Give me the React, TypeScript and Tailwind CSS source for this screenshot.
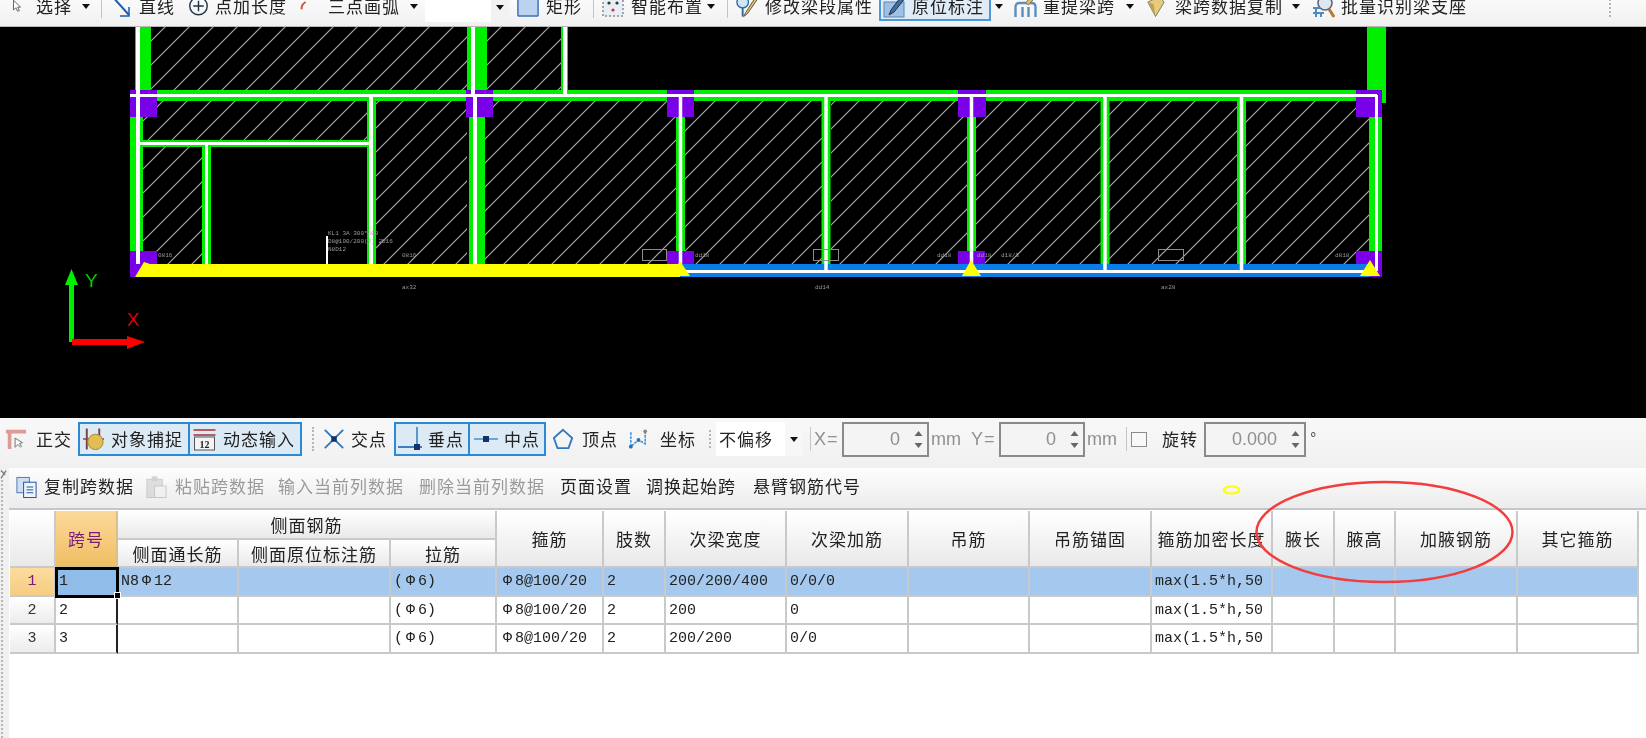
import React from "react";

const T = ({ className = "", children }: { className?: string; children: React.ReactNode }) => (
  <div className={`shrink-0 mb-[2px] whitespace-nowrap text-[17px] leading-none tracking-[1px] ${className}`}>{children}</div>
);
const Caret = ({ className = "" }: { className?: string }) => (
  <svg viewBox="0 0 8 5" className={`w-[8px] h-[5px] shrink-0 ${className}`}><polygon points="0,0 8,0 4,5" fill="#111" /></svg>
);
const Sep = ({ className = "" }: { className?: string }) => <div className={`w-[1px] shrink-0 bg-[#c4c4c4] ${className}`} />;
const Dots = ({ className = "" }: { className?: string }) => <div className={`w-[2px] shrink-0 border-l-2 border-dotted border-[#b5b5b5] ${className}`} />;

const I = ({ className = "", children }: { className?: string; children: React.ReactNode }) => (
  <svg viewBox="0 0 24 24" className={`shrink-0 h-[24px] ${className}`}>{children}</svg>
);

const NumBox = ({ className = "", value }: { className?: string; value: string }) => (
  <div className={`h-[35px] shrink-0 flex items-center justify-end border-2 border-[#8a8a8a] bg-[#f4f4f4] ${className}`}>
    <span className="text-[18px] text-[#8f8f8f] font-['Liberation_Sans',sans-serif] mr-[9px]">{value}</span>
    <div className="w-[18px] flex flex-col gap-[7px] items-center">
      <svg viewBox="0 0 8 5" className="w-[9px] h-[5px]"><polygon points="0,5 8,5 4,0" fill="#666" /></svg>
      <svg viewBox="0 0 8 5" className="w-[9px] h-[5px]"><polygon points="0,0 8,0 4,5" fill="#666" /></svg>
    </div>
  </div>
);

const Bar = () => <span className="inline-block w-[15px] text-center">Φ</span>;

const CAD = () => {
  const hatch: [number, number, number, number][] = [
    [151, 27, 316, 63], [487, 27, 76, 63], [143, 100, 225, 40], [143, 146, 59, 118], [376, 100, 91, 164],
    [485, 100, 191, 164], [685, 100, 137, 164], [831, 100, 136, 164], [976, 100, 125, 164], [1109, 100, 128, 164], [1246, 100, 123, 164],
  ];
  const inner = [680.5, 826, 971.5, 1105, 1241.5];
  const purple: [number, number, number, number][] = [
    [130, 90, 27, 27], [466, 90, 27, 27], [667, 90, 27, 27], [958, 90, 28, 27], [1356, 90, 26, 27],
    [130, 251, 27, 26], [667, 251, 27, 13], [958, 251, 27, 13], [1356, 251, 26, 26],
  ];
  const tiny: [number, number, string][] = [
    [158, 257, "0816"], [402, 257, "0816"], [695, 257, "dd18"], [937, 257, "dd18"], [977, 257, "dd18"], [1001, 257, "d18/3"], [1335, 257, "d818"],
    [402, 289, "ax32"], [815, 289, "dd14"], [1161, 289, "ax28"], [328, 235, "KL1 3A 300*500"], [328, 243, "D8@100/200(2) 2D16"], [328, 251, "N8D12"],
  ];
  return (
    <svg viewBox="0 27 1646 391" className="block w-[1646px] h-[391px] bg-black">
      <defs>
        <pattern id="h" width="24" height="24" patternUnits="userSpaceOnUse">
          <path d="M-2 2 L2 -2 M0 24 L24 0 M22 26 L26 22" stroke="#a8a8a8" strokeWidth="1.2" />
        </pattern>
      </defs>
      {hatch.map(([x, y, w, h], i) => <rect key={i} x={x} y={y} width={w} height={h} fill="url(#h)" />)}
      <g fill="#00ee00">
        <rect x="135" y="27" width="16" height="64" />
        <rect x="467" y="27" width="20" height="64" />
        <rect x="561" y="27" width="7" height="64" />
        <rect x="1367" y="27" width="19" height="76" />
        <rect x="130" y="90" width="1240" height="11" />
        <rect x="130" y="117" width="13" height="135" />
        <rect x="469" y="117" width="16" height="148" />
        <rect x="1369" y="117" width="13" height="135" />
        <rect x="140" y="140" width="231" height="7" />
        <rect x="202" y="146" width="9" height="119" />
        <rect x="367" y="100" width="9" height="165" />
        {inner.map((x) => <rect key={x} x={x - 4.5} y="100" width="9" height="165" />)}
      </g>
      {purple.map(([x, y, w, h], i) => <rect key={i} x={x} y={y} width={w} height={h} fill="#7a00e8" />)}
      <rect x="680" y="264" width="690" height="13" fill="#0a7ee8" />
      <rect x="680" y="270" width="695" height="3" fill="#fff" />
      <polygon points="135,277 144,262 150,264 680,264 680,277" fill="#ffff00" />
      <g fill="#fff">
        <rect x="136" y="27" width="4" height="237" />
        <rect x="471" y="27" width="4" height="68" />
        <rect x="473" y="95" width="4" height="169" />
        <rect x="563" y="27" width="4" height="68" />
        <rect x="1375" y="95" width="3" height="176" />
        <rect x="130" y="94" width="1247" height="3" />
        <rect x="140" y="142" width="230" height="3" />
        <rect x="205" y="143" width="3" height="121" />
        <rect x="369" y="96" width="4" height="168" />
        <rect x="326" y="236" width="2" height="28" />
        {inner.map((x) => <rect key={x} x={x - 1.75} y="95" width="3.5" height={x === 680.5 || x === 971.5 ? 169 : 176} />)}
      </g>
      <g fill="#ffff00">
        <polygon points="671,276 680,261 690,276" />
        <polygon points="962,276 971,260 981,276" />
        <polygon points="1360,276 1370,260 1380,276" />
      </g>
      <g fill="none" stroke="#8c8c8c" strokeWidth="1">
        <rect x="642.5" y="249.5" width="24" height="11" />
        <rect x="813.5" y="249.5" width="25" height="11" />
        <rect x="1158.5" y="249.5" width="25" height="11" />
      </g>
      {tiny.map(([x, y, s], i) => (
        <text key={i} x={x} y={y} fontSize="6" fill="#9a9a9a" fontFamily="Liberation Mono, monospace">{s}</text>
      ))}
      <rect x="69" y="280" width="5" height="62" fill="#00ee00" />
      <polygon points="71.5,269 78,285 65,285" fill="#00ee00" />
      <rect x="72" y="339" width="56" height="6" fill="#ff0000" />
      <polygon points="127,336 145,342 127,349" fill="#ff0000" />
      <text x="85" y="287" fontSize="19" fill="#00d000" fontFamily="Liberation Sans, sans-serif">Y</text>
      <text x="127" y="326" fontSize="19" fill="#e00000" fontFamily="Liberation Sans, sans-serif">X</text>
    </svg>
  );
};

const TopBar = () => (
  <div className="h-[27px] pb-[14px] flex items-center overflow-hidden bg-gradient-to-b from-[#fafafa] to-[#f0f0f0] border-b border-[#b8b8b8] text-[#222]">
    <I className="ml-[10px] w-[14px]"><path d="M6 2 L6 19 L10 15 L13 21 L16 20 L13 14 L18 14 Z" fill="#fff" stroke="#555" strokeWidth="1.5" /></I>
    <T className="ml-[12px] w-[36px]">选择</T>
    <Caret className="ml-[10px]" />
    <Sep className="ml-[11px] h-[24px]" />
    <I className="ml-[6px] w-[26px]"><path d="M2 1 L20 21" stroke="#1d5fa8" strokeWidth="2" /><path d="M20 13 V22 H11" stroke="#1d5fa8" strokeWidth="1.5" fill="none" /></I>
    <T className="ml-[5px] w-[36px]">直线</T>
    <I className="ml-[13px] w-[21px]"><circle cx="12" cy="12" r="10" fill="none" stroke="#234" strokeWidth="1.6" /><path d="M12 6 V18 M6 12 H18" stroke="#234" strokeWidth="1.6" /></I>
    <T className="ml-[6px] w-[73px]">点加长度</T>
    <I className="ml-[11px] w-[8px]"><path d="M20 0 Q6 8 8 22" stroke="#c8583a" strokeWidth="6" fill="none" /></I>
    <T className="ml-[21px] w-[72px]">三点画弧</T>
    <Caret className="ml-[10px]" />
    <div className="ml-[7px] w-[84px] h-[22px] self-start flex items-center bg-white">
      <div className="w-[66px] h-full" />
      <div className="w-[18px] h-full bg-[#f2f2f2] flex items-center justify-center pb-[7px]"><Caret /></div>
    </div>
    <I className="ml-[8px] w-[22px]"><rect x="1" y="1" width="22" height="22" rx="1" fill="#bcd3f0" stroke="#3f6fb5" strokeWidth="1.6" /></I>
    <T className="ml-[7px] w-[36px]">矩形</T>
    <Sep className="ml-[11px] h-[24px]" />
    <I className="ml-[7px] w-[24px]"><rect x="2" y="2" width="20" height="20" fill="#e8eef5" stroke="#556" strokeDasharray="2 2" /><circle cx="8" cy="9" r="1.6" fill="#333" /><circle cx="16" cy="9" r="1.6" fill="#333" /><circle cx="12" cy="16" r="1.6" fill="#c33" /></I>
    <T className="ml-[6px] w-[72px]">智能布置</T>
    <Caret className="ml-[4px]" />
    <Sep className="ml-[12px] h-[24px]" />
    <I className="ml-[7px] w-[23px]"><circle cx="8" cy="8" r="6" fill="#cfe6f7" stroke="#2c6aa0" strokeWidth="1.4" /><path d="M8 14 V23" stroke="#2c6aa0" strokeWidth="2" /><path d="M22 2 L11 19 L9 23 L13 20 L24 4 Z" fill="#e5c05a" stroke="#555" /></I>
    <T className="ml-[7px] w-[107px]">修改梁段属性</T>
    <div className="ml-[7px] w-[112px] h-[30px] shrink-0 flex items-center border-2 border-[#4f98d8] bg-[#dfebf7]">
      <I className="ml-[2px] w-[24px]"><rect x="1" y="8" width="20" height="15" fill="#9fc0e4" stroke="#5b86b5" /><path d="M20 0 L8 16 L6 21 L11 18 L23 3 Z" fill="#3c6fa8" stroke="#234" /></I>
      <T className="ml-[5px] w-[74px]">原位标注</T>
    </div>
    <Caret className="ml-[4px]" />
    <I className="ml-[10px] w-[25px]"><path d="M2 23 V13 Q2 9 6 9 H18 Q22 9 22 13 V23 M9 23 V13 M15 23 V13" fill="none" stroke="#5c8fc0" strokeWidth="2.4" /><path d="M20 0 L12 9 L15 11 L23 2 Z" fill="#e2bd60" stroke="#776" /></I>
    <T className="ml-[5px] w-[72px]">重提梁跨</T>
    <Caret className="ml-[11px]" />
    <I className="ml-[10px] w-[23px]"><path d="M4 8 L16 2 L21 8 L12 23 Z" fill="#e6cc7a" stroke="#776" /><path d="M4 8 L12 23 L10 10 Z" fill="#b8a45a" /></I>
    <T className="ml-[8px] w-[107px]">梁跨数据复制</T>
    <Caret className="ml-[10px]" />
    <I className="ml-[11px] w-[24px]"><circle cx="14" cy="9" r="7" fill="#dbe8f2" stroke="#667" strokeWidth="1.6" /><path d="M18 15 L23 23" stroke="#b7792e" strokeWidth="3" /><path d="M2 14 H9 M2 19 H13 M5 14 V23 M10 19 V23" stroke="#4c8cc4" strokeWidth="2" /></I>
    <T className="ml-[6px] w-[126px]">批量识别梁支座</T>
    <Dots className="ml-[142px] h-[22px]" />
  </div>
);

const blueBtn = "h-[34px] shrink-0 flex items-center border-2 border-[#2a8ad8] bg-[#dceaf6]";

const SnapBar = () => (
  <div className="h-[50px] pb-[8px] flex items-center bg-gradient-to-b from-[#f8f8f8] to-[#f0f0f0] text-[#222]">
    <I className="ml-[5px] w-[22px]"><path d="M1 4 H23 M5 4 V23" stroke="#e09a96" strokeWidth="4" fill="none" /><path d="M11 11 V21 L14 18 L17 21 L18 20 L16 17 L19 16 Z" fill="#fff" stroke="#666" /></I>
    <T className="ml-[9px] w-[36px]">正交</T>
    <div className={`ml-[6px] w-[112px] ${blueBtn}`}>
      <I className="ml-[2px] w-[23px]"><path d="M1 12 H23" stroke="#a33" strokeWidth="1.5" /><path d="M5 1 V23 M18 1 V10" stroke="#744" strokeWidth="2" /><circle cx="14" cy="15" r="8" fill="#e2bd55" stroke="#a88428" /></I>
      <T className="ml-[6px] w-[74px]">对象捕捉</T>
    </div>
    <div className={`w-[112px] border-l-0 ${blueBtn}`}>
      <I className="ml-[2px] w-[25px]"><path d="M1 3 H23 M1 8 H23" stroke="#b06060" strokeWidth="2" /><rect x="2" y="10" width="20" height="13" fill="#f4f4f4" stroke="#555" /><text x="12" y="21" fontSize="10" fontWeight="700" textAnchor="middle" fill="#222" fontFamily="Liberation Serif, serif">12</text></I>
      <T className="ml-[6px] w-[72px]">动态输入</T>
    </div>
    <Dots className="ml-[10px] h-[24px]" />
    <I className="ml-[9px] w-[22px]"><path d="M2 2 L22 22 M22 2 L2 22" stroke="#2f78bd" strokeWidth="2" /><rect x="9" y="9" width="6" height="6" fill="#12336b" /></I>
    <T className="ml-[6px] w-[36px]">交点</T>
    <div className={`ml-[7px] w-[76px] ${blueBtn}`}>
      <I className="ml-[2px] w-[24px]"><path d="M0 20 H24" stroke="#3c7fc2" strokeWidth="2" /><path d="M19 0 V22" stroke="#3c7fc2" strokeWidth="1.6" /><rect x="16" y="17" width="6" height="6" fill="#12336b" /></I>
      <T className="ml-[6px] w-[36px]">垂点</T>
    </div>
    <div className={`w-[76px] border-l-0 ${blueBtn}`}>
      <I className="ml-[4px] w-[24px]"><path d="M0 12 H24" stroke="#6aa5dc" strokeWidth="2" /><rect x="9" y="9" width="6" height="6" fill="#12336b" /></I>
      <T className="ml-[6px] w-[36px]">中点</T>
    </div>
    <I className="ml-[6px] w-[22px]"><polygon points="12,2 22,11 18,22 6,22 2,11" fill="none" stroke="#2f78bd" strokeWidth="2" /></I>
    <T className="ml-[8px] w-[36px]">顶点</T>
    <I className="ml-[9px] w-[23px]"><path d="M4 5 V20 L12 13 L19 17 V5" fill="none" stroke="#3f8fd8" strokeWidth="1.6" strokeDasharray="3 1" /><circle cx="4" cy="20" r="2" fill="#2a6fb2" /><circle cx="12" cy="13" r="2" fill="#2a6fb2" /><circle cx="19" cy="4" r="2" fill="#888" /></I>
    <T className="ml-[10px] w-[36px]">坐标</T>
    <Dots className="ml-[13px] h-[18px]" />
    <div className="ml-[5px] w-[86px] h-[34px] shrink-0 flex items-center">
      <div className="w-[69px] h-full bg-white flex items-center pl-[3px]"><T>不偏移</T></div>
      <div className="w-[17px] h-full bg-[#f7f7f7] flex items-center justify-center"><Caret /></div>
    </div>
    <Sep className="ml-[8px] h-[24px]" />
    <div className="ml-[3px] w-[25px] shrink-0 text-[18px] tracking-[1px] text-[#909090] font-['Liberation_Sans',sans-serif]">X=</div>
    <NumBox className="ml-[3px] w-[87px]" value="0" />
    <div className="ml-[2px] w-[33px] shrink-0 text-[18px] text-[#909090] font-['Liberation_Sans',sans-serif]">mm</div>
    <div className="ml-[7px] w-[25px] shrink-0 text-[18px] tracking-[1px] text-[#909090] font-['Liberation_Sans',sans-serif]">Y=</div>
    <NumBox className="ml-[3px] w-[86px]" value="0" />
    <div className="ml-[2px] w-[33px] shrink-0 text-[18px] text-[#909090] font-['Liberation_Sans',sans-serif]">mm</div>
    <Sep className="ml-[6px] h-[24px]" />
    <div className="ml-[4px] w-[16px] h-[15px] shrink-0 border border-[#8c8c8c] bg-[#f8f8f8]" />
    <T className="ml-[15px] w-[36px]">旋转</T>
    <NumBox className="ml-[6px] w-[102px]" value="0.000" />
    <div className="ml-[4px] text-[16px] text-[#555] font-['Liberation_Sans',sans-serif]">°</div>
  </div>
);

const GridBar = () => (
  <div className="h-[42px] pb-[3px] flex items-center bg-gradient-to-b from-[#fdfdfd] to-[#ececec] border-b-2 border-[#c5c5cc] text-[#222]">
    <I className="ml-[6px] w-[23px]"><rect x="2" y="2" width="13" height="16" fill="#cfe0f5" stroke="#4a78b5" /><rect x="9" y="7" width="13" height="16" fill="#eef4fb" stroke="#1d4f9a" /><path d="M12 12 H19 M12 15 H19 M12 18 H19" stroke="#1d4f9a" /></I>
    <T className="ml-[6px] w-[91px]">复制跨数据</T>
    <I className="ml-[10px] w-[23px] opacity-40"><rect x="2" y="4" width="16" height="19" fill="#bbb" stroke="#888" /><rect x="7" y="1" width="6" height="5" fill="#999" /><rect x="10" y="11" width="12" height="12" fill="#eee" stroke="#888" /></I>
    <T className="ml-[7px] w-[90px] text-[#9a9a9a]">粘贴跨数据</T>
    <T className="ml-[13px] w-[126px] text-[#9a9a9a]">输入当前列数据</T>
    <T className="ml-[15px] w-[126px] text-[#9a9a9a]">删除当前列数据</T>
    <T className="ml-[15px] w-[73px]">页面设置</T>
    <T className="ml-[13px] w-[92px]">调换起始跨</T>
    <T className="ml-[15px] w-[108px]">悬臂钢筋代号</T>
  </div>
);

const th = "border-r-2 border-b-2 border-[#c9c9c9] bg-gradient-to-b from-white to-[#e9e9e9] font-normal text-[17px] leading-none tracking-[1px] text-[#222] text-center p-0 whitespace-nowrap overflow-hidden";
const td = "border-r-2 border-b-2 border-[#c9c9c9] p-0 pl-[3px] text-left text-[15px] leading-none text-[#222] whitespace-nowrap overflow-hidden font-['Liberation_Mono','Noto_Sans_CJK_SC',monospace]";
const rh = "border-r-2 border-b-2 border-[#c9c9c9] p-0 text-center text-[15px] leading-none font-['Liberation_Mono',monospace]";

const rows = [
  { n: "1", a: <>N8<Bar />12</>, w: "200/200/400", j: "0/0/0" },
  { n: "2", a: "", w: "200", j: "0" },
  { n: "3", a: "", w: "200/200", j: "0/0" },
];

const Grid = () => (
  <table className="table-fixed w-[1629px] mt-[1px] ml-[1px] border-separate border-spacing-0">
    <colgroup>
      <col className="w-[46px]" /><col className="w-[62px]" /><col className="w-[121px]" /><col className="w-[152px]" /><col className="w-[106px]" />
      <col className="w-[107px]" /><col className="w-[62px]" /><col className="w-[121px]" /><col className="w-[122px]" /><col className="w-[121px]" />
      <col className="w-[122px]" /><col className="w-[121px]" /><col className="w-[62px]" /><col className="w-[61px]" /><col className="w-[122px]" /><col className="w-[121px]" />
    </colgroup>
    <thead>
      <tr className="h-[29px]">
        <th rowSpan={2} className={th}></th>
        <th rowSpan={2} className="border-r-2 border-b-2 border-[#d8c08c] bg-gradient-to-b from-[#fbd99a] to-[#efbe62] font-normal text-[17px] leading-none tracking-[1px] text-[#7b1a78] text-center p-0">跨号</th>
        <th colSpan={3} className={th}>侧面钢筋</th>
        <th rowSpan={2} className={th}>箍筋</th>
        <th rowSpan={2} className={th}>肢数</th>
        <th rowSpan={2} className={th}>次梁宽度</th>
        <th rowSpan={2} className={th}>次梁加筋</th>
        <th rowSpan={2} className={th}>吊筋</th>
        <th rowSpan={2} className={th}>吊筋锚固</th>
        <th rowSpan={2} className={th}>箍筋加密长度</th>
        <th rowSpan={2} className={th}>腋长</th>
        <th rowSpan={2} className={th}>腋高</th>
        <th rowSpan={2} className={th}>加腋钢筋</th>
        <th rowSpan={2} className={th}>其它箍筋</th>
      </tr>
      <tr className="h-[28px]">
        <th className={th}>侧面通长筋</th>
        <th className={th}>侧面原位标注筋</th>
        <th className={th}>拉筋</th>
      </tr>
    </thead>
    <tbody>
      {rows.map((r, i) => {
        const sel = i === 0;
        const bg = sel ? "bg-[#a4c8ee]" : "bg-white";
        return (
          <tr key={r.n} className={i === 1 ? "h-[28px]" : "h-[29px]"}>
            <td className={`${rh} ${sel ? "bg-gradient-to-b from-[#fbdc9f] to-[#f6cc80] text-[#7b1a78]" : "bg-gradient-to-b from-white to-[#ececec] text-[#333]"}`}>{r.n}</td>
            {sel ? (
              <td className={`${td} relative bg-[#8fbce9] overflow-visible`}>
                1
                <div className="absolute -left-[1px] -top-[1px] w-[64px] h-[31px] border-[3px] border-black" />
                <div className="absolute -right-[5px] -bottom-[4px] w-[7px] h-[7px] bg-black border border-white" />
              </td>
            ) : (
              <td className={`${td} bg-white !border-r-[#222]`}>{r.n}</td>
            )}
            <td className={`${td} ${bg}`}>{r.a}</td>
            <td className={`${td} ${bg}`}></td>
            <td className={`${td} ${bg}`}>(<Bar />6)</td>
            <td className={`${td} ${bg}`}><Bar />8@100/20</td>
            <td className={`${td} ${bg}`}>2</td>
            <td className={`${td} ${bg}`}>{r.w}</td>
            <td className={`${td} ${bg}`}>{r.j}</td>
            <td className={`${td} ${bg}`}></td>
            <td className={`${td} ${bg}`}></td>
            <td className={`${td} ${bg}`}>max(1.5*h,50</td>
            <td className={`${td} ${bg}`}></td>
            <td className={`${td} ${bg}`}></td>
            <td className={`${td} ${bg}`}></td>
            <td className={`${td} ${bg}`}></td>
          </tr>
        );
      })}
    </tbody>
  </table>
);

export default function App() {
  return (
    <div className="relative w-[1646px] h-[738px] overflow-hidden bg-white blur-[0.4px] font-['Noto_Sans_CJK_SC',sans-serif]">
      <TopBar />
      <CAD />
      <SnapBar />
      <div className="flex">
        <div className="w-[9px] h-[270px] shrink-0 bg-[#f0f0f0] pl-[1px]">
          <svg viewBox="0 0 8 14" className="block w-[7px] h-[12px] -ml-[1px]"><path d="M1 12 L7 3 M1 3 L6 8" stroke="#777" strokeWidth="1.5" /></svg>
          <div className="w-[2px] h-[258px] border-l-2 border-dotted border-[#b5b5b5]" />
        </div>
        <div className="flex-1 min-w-0 bg-white">
          <GridBar />
          <Grid />
        </div>
      </div>
      <svg className="absolute left-0 top-0 w-[1646px] h-[738px] pointer-events-none" viewBox="0 0 1646 738">
        <ellipse cx="1231.5" cy="490" rx="8" ry="3.5" fill="none" stroke="#ffff00" strokeWidth="2" />
        <ellipse cx="1384.5" cy="532" rx="128" ry="50" fill="none" stroke="#f43c3c" strokeWidth="2.5" />
      </svg>
    </div>
  );
}
